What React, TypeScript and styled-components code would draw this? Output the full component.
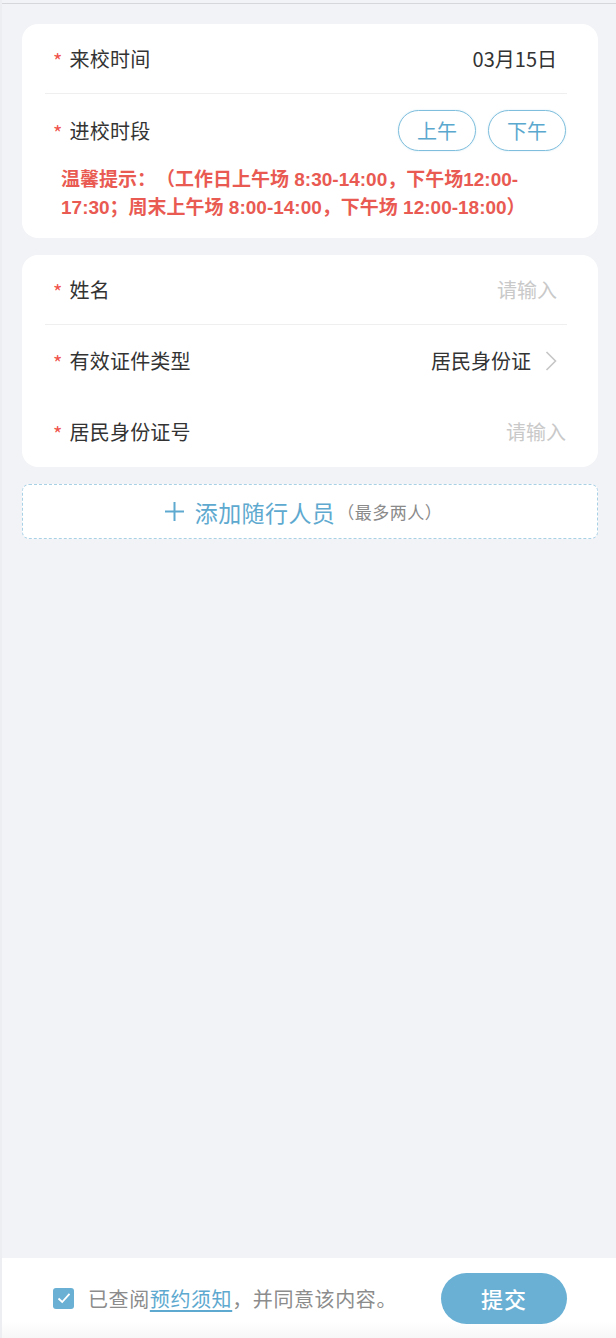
import React from "react";
import styled, { createGlobalStyle } from "styled-components";

const Global = createGlobalStyle`
  html, body { margin: 0; padding: 0; background: #eceef1; }
  body {
    font-family: "Noto Sans CJK SC", "Noto Sans", sans-serif;
    -webkit-font-smoothing: antialiased;
    text-spacing-trim: space-all;
  }
  * { box-sizing: border-box; }
`;

const Page = styled.div`
  min-height: 1338px;
  margin-left: 2px;
  background: #f2f3f7;
  display: flex;
  flex-direction: column;
`;

const TopLine = styled.div`
  margin-top: 3px;
  height: 1px;
  background: #d6d7da;
`;

const Main = styled.main`
  flex: 1;
  padding: 20px 18px 0 20px;
  display: flex;
  flex-direction: column;
  gap: 17px;
`;

const Card = styled.section`
  background: #fff;
  border-radius: 16px;
  padding: 0 31px 0 23px;
`;

const Row = styled.div<{ $h?: number; $divider?: boolean; $pr?: number }>`
  height: ${(p) => p.$h ?? 70}px;
  display: flex;
  align-items: center;
  justify-content: space-between;
  padding: 0 ${(p) => p.$pr ?? 10}px 0 8px;
  border-bottom: ${(p) => (p.$divider ? "1px solid #efefef" : "none")};
`;

const Label = styled.div`
  display: flex;
  align-items: center;
  font-size: 20px;
  color: #333;
  letter-spacing: 0.2px;
`;

const Star = styled.span`
  color: #f0544c;
  font-size: 20px;
  margin-right: 7px;
  position: relative;
  top: 2px;
`;

const Value = styled.div`
  font-size: 20px;
  color: #333;
  display: flex;
  align-items: center;
  gap: 14px;
`;

const Placeholder = styled.div`
  font-size: 20px;
  color: #c9c9c9;
`;

const Pills = styled.div`
  display: flex;
  gap: 12px;
  margin-right: -9px;
`;

const Pill = styled.button`
  width: 78px;
  height: 41px;
  border-radius: 21px;
  border: 1px solid #7fbfdd;
  background: #fff;
  color: #5ba8cf;
  font-family: inherit;
  font-size: 20px;
  padding: 0;
  box-shadow: 0 0 2px rgba(127, 191, 221, 0.35);
`;

const Tip = styled.p`
  margin: 0;
  padding: 0 0 16px 16px;
  font-family: "Liberation Sans", "Noto Sans CJK SC", sans-serif;
  font-size: 19px;
  line-height: 28px;
  font-weight: 700;
  color: #e95a52;
  white-space: nowrap;
`;

const AddButton = styled.button`
  height: 55px;
  border: 1px dashed #a9d1e6;
  border-radius: 7px;
  background: #fff;
  display: flex;
  align-items: center;
  justify-content: center;
  font-family: inherit;
  padding: 0 13px 0 0;
`;

const AddText = styled.span`
  color: #5ea9cf;
  font-size: 23px;
  margin-left: 11px;
  letter-spacing: 0.4px;
`;

const AddHint = styled.span`
  color: #8a8a8a;
  font-size: 17px;
  margin-left: 2px;
  letter-spacing: 0.5px;
`;

const Footer = styled.footer`
  height: 80px;
  background: linear-gradient(#ffffff 80%, #f7f7f8);
  display: flex;
  align-items: center;
  justify-content: space-between;
  padding: 0 49px 0 51px;
`;

const Agree = styled.label`
  display: flex;
  align-items: center;
  font-size: 20px;
  color: #8c8c8c;
  letter-spacing: 0.6px;
`;

const Check = styled.span`
  width: 21px;
  height: 21px;
  border-radius: 3px;
  background: #69b0d4;
  display: inline-flex;
  align-items: center;
  justify-content: center;
  margin-right: 14px;
`;

const Link = styled.a`
  color: #5ea9cf;
  text-decoration: underline;
  text-underline-offset: 3px;
`;

const Submit = styled.button`
  width: 126px;
  height: 51px;
  border-radius: 26px;
  border: none;
  background: #69b0d4;
  color: #fff;
  font-family: inherit;
  font-size: 22px;
  font-weight: 500;
  letter-spacing: 1px;
`;

export default function App() {
  return (
    <>
      <Global />
      <Page>
        <TopLine />
        <Main>
          <Card>
            <Row $divider>
              <Label>
                <Star>*</Star>来校时间
              </Label>
              <Value>03月15日</Value>
            </Row>
            <Row $h={72}>
              <Label>
                <Star>*</Star>进校时段
              </Label>
              <Pills>
                <Pill>上午</Pill>
                <Pill>下午</Pill>
              </Pills>
            </Row>
            <Tip>
              温馨提示：（工作日上午场 8:30-14:00，下午场12:00-
              <br />
              17:30；周末上午场 8:00-14:00，下午场 12:00-18:00）
            </Tip>
          </Card>

          <Card>
            <Row $divider>
              <Label>
                <Star>*</Star>姓名
              </Label>
              <Placeholder>请输入</Placeholder>
            </Row>
            <Row $h={71}>
              <Label>
                <Star>*</Star>有效证件类型
              </Label>
              <Value>
                居民身份证
                <svg width="12" height="22" viewBox="0 0 12 22">
                  <polyline points="1.5,2 10.5,11 1.5,20" fill="none" stroke="#c6c6c6" strokeWidth="1.6" />
                </svg>
              </Value>
            </Row>
            <Row $h={71} $pr={1}>
              <Label>
                <Star>*</Star>居民身份证号
              </Label>
              <Placeholder>请输入</Placeholder>
            </Row>
          </Card>

          <AddButton>
            <svg width="19" height="19" viewBox="0 0 19 19">
              <path d="M9.5 0v19M0 9.5h19" stroke="#5ea9cf" strokeWidth="2" />
            </svg>
            <AddText>添加随行人员</AddText>
            <AddHint>（最多两人）</AddHint>
          </AddButton>
        </Main>

        <Footer>
          <Agree>
            <Check>
              <svg width="14" height="12" viewBox="0 0 14 12">
                <polyline points="1.5,6.5 5.2,10 12.5,1.8" fill="none" stroke="#fff" strokeWidth="1.8" />
              </svg>
            </Check>
            已查阅<Link>预约须知</Link>，并同意该内容。
          </Agree>
          <Submit>提交</Submit>
        </Footer>
      </Page>
    </>
  );
}
